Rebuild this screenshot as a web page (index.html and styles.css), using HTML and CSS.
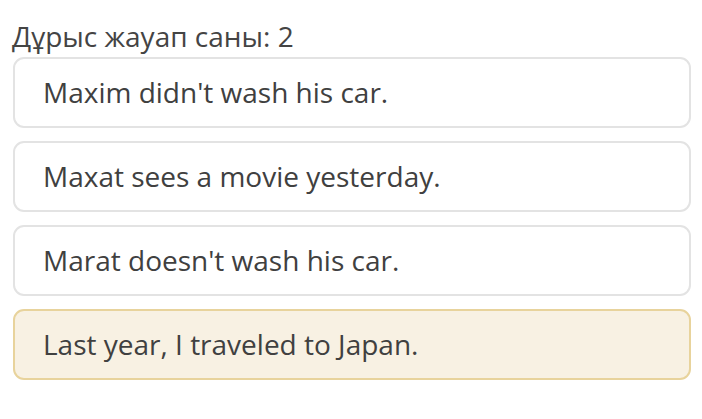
FILE: index.html
```html
<!DOCTYPE html>
<html>
<head>
<meta charset="utf-8">
<link rel="stylesheet" href="styles.css">
</head>
<body>
<div class="wrap">
  <div class="title">Дұрыс жауап саны: 2</div>
  <div class="list">
    <div class="opt">Maxim didn't wash his car.</div>
    <div class="opt">Maxat sees a movie yesterday.</div>
    <div class="opt">Marat doesn't wash his car.</div>
    <div class="opt sel">Last year, I traveled to Japan.</div>
  </div>
</div>
</body>
</html>
```
FILE: styles.css
```css
html, body { margin: 0; padding: 0; background: #fff; }
body { font-family: "Open Sans", "Noto Sans", sans-serif; color: #404040; }
.wrap { padding: 16px 11px 0 13px; }
.title { font-size: 28px; line-height: 40px; height: 41px; color: #444; margin-left: -1px; }
.list { display: flex; flex-direction: column; gap: 13px; }
.opt {
  height: 71px;
  box-sizing: border-box;
  border: 2px solid #e3e3e3;
  border-radius: 11px;
  padding: 0 0 1px 28px;
  display: flex;
  align-items: center;
  font-size: 28px;
  color: #404040;
  background: #fff;
}
.opt.sel { background: #f8f1e3; border-color: #e8d39c; }
```
